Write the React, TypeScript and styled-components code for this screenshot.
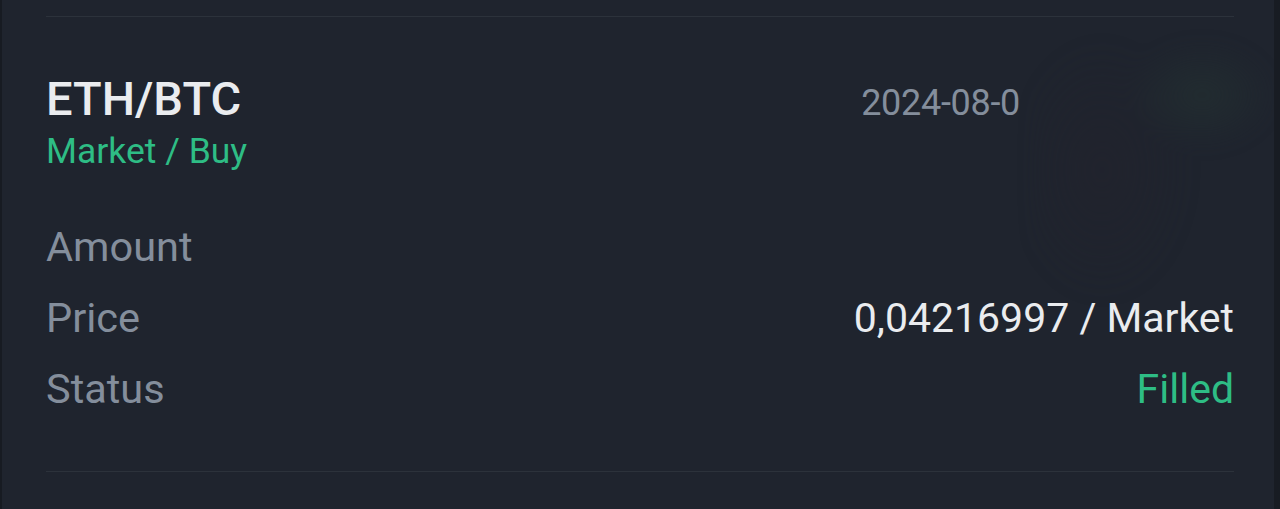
import styled, { createGlobalStyle } from "styled-components";

const GlobalStyle = createGlobalStyle`
  html, body {
    margin: 0;
    padding: 0;
    background: #1e232d;
  }
  body {
    font-family: Roboto, "Noto Sans", sans-serif;
  }
`;

const Frame = styled.div`
  position: relative;
  width: 1280px;
  height: 509px;
  overflow: hidden;
  background: #1f242e;
  border-left: 2px solid #171b22;
  border-right: 6px solid #181c23;
  box-sizing: border-box;
`;

const Card = styled.div`
  padding: 16px 40px 0 44px;
  display: flex;
  flex-direction: column;
`;

const Divider = styled.div`
  height: 1px;
  background: #2c323b;
`;

const Header = styled.div`
  display: flex;
  justify-content: space-between;
  align-items: flex-start;
  padding-top: 55px;
`;

const Pair = styled.div`
  display: flex;
  flex-direction: column;
`;

const Symbol = styled.div`
  color: #eaecef;
  font-size: 47px;
  font-weight: 500;
  line-height: 54px;
`;

const OrderType = styled.div`
  color: #2ebd85;
  font-size: 35.5px;
  line-height: 50px;
`;

const DateText = styled.div`
  color: #848e9c;
  font-size: 36px;
  line-height: 52px;
  letter-spacing: -0.3px;
  margin-top: 5px;
  margin-right: 214px;
`;

const Rows = styled.div`
  display: flex;
  flex-direction: column;
  padding-top: 46px;
  padding-bottom: 36px;
`;

const Row = styled.div`
  display: flex;
  justify-content: space-between;
  align-items: baseline;
  height: 71px;
`;

const Label = styled.span`
  color: #848e9c;
  font-size: 41.5px;
`;

const Value = styled.span<{ $accent?: boolean }>`
  color: ${(p) => (p.$accent ? "#2ebd85" : "#eaecef")};
  font-size: 41px;
`;

const Redaction = styled.div`
  position: absolute;
  left: 1030px;
  top: 40px;
  width: 240px;
  height: 260px;
  pointer-events: none;
  background:
    radial-gradient(ellipse 75px 55px at 170px 55px, rgba(36, 50, 50, 0.6), transparent),
    radial-gradient(ellipse 90px 130px at 70px 130px, rgba(36, 34, 44, 0.4), transparent);
  filter: blur(8px);
`;

export default function App() {
  return (
    <>
      <GlobalStyle />
      <Frame>
        <Card>
          <Divider />
          <Header>
            <Pair>
              <Symbol>ETH/BTC</Symbol>
              <OrderType>Market / Buy</OrderType>
            </Pair>
            <DateText>2024-08-0</DateText>
          </Header>
          <Rows>
            <Row>
              <Label>Amount</Label>
              <Value></Value>
            </Row>
            <Row>
              <Label>Price</Label>
              <Value>0,04216997 / Market</Value>
            </Row>
            <Row>
              <Label>Status</Label>
              <Value $accent>Filled</Value>
            </Row>
          </Rows>
          <Divider />
        </Card>
        <Redaction />
      </Frame>
    </>
  );
}
